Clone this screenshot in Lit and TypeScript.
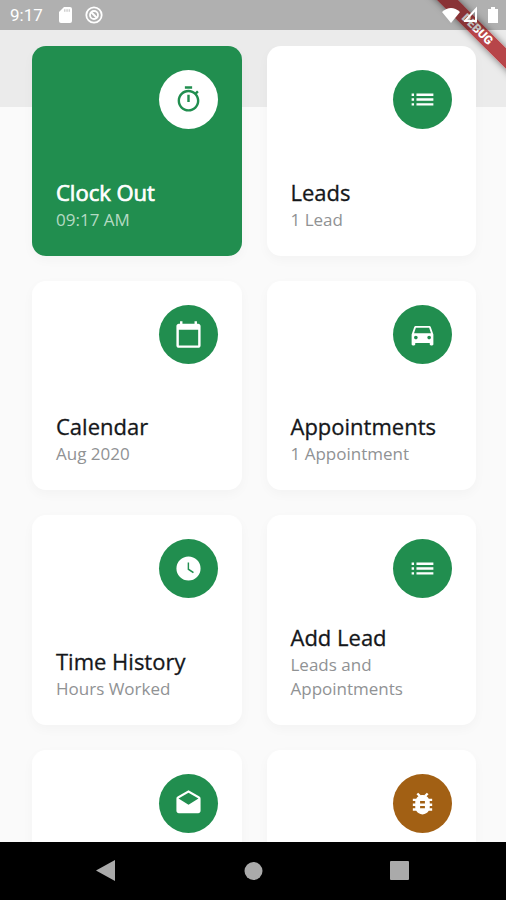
import { LitElement, html, css, svg } from "lit";
import { customElement, property } from "lit/decorators.js";
import { classMap } from "lit/directives/class-map.js";

const icons: Record<string, string> = {
  timer:
    "M15 1H9v2h6V1zm-4 13h2V8h-2v6zm8.03-6.61l1.42-1.42c-.43-.51-.9-.99-1.41-1.41l-1.42 1.42C16.07 4.74 14.12 4 12 4c-4.97 0-9 4.03-9 9s4.02 9 9 9 9-4.03 9-9c0-2.12-.74-4.07-1.97-5.61zM12 20c-3.87 0-7-3.13-7-7s3.13-7 7-7 7 3.13 7 7-3.13 7-7 7z",
  list:
    "M3 13h2v-2H3v2zm0 4h2v-2H3v2zm0-8h2V7H3v2zm4 4h14v-2H7v2zm0 4h14v-2H7v2zM7 7v2h14V7H7z",
  calendar:
    "M20 3h-1V1h-2v2H7V1H5v2H4c-1.1 0-2 .9-2 2v16c0 1.1.9 2 2 2h16c1.1 0 2-.9 2-2V5c0-1.1-.9-2-2-2zm0 18H4V8h16v13z",
  car:
    "M18.92 6.01C18.72 5.42 18.16 5 17.5 5h-11c-.66 0-1.21.42-1.42 1.01L3 12v8c0 .55.45 1 1 1h1c.55 0 1-.45 1-1v-1h12v1c0 .55.45 1 1 1h1c.55 0 1-.45 1-1v-8l-2.08-5.99zM6.5 16c-.83 0-1.5-.67-1.5-1.5S5.67 13 6.5 13s1.5.67 1.5 1.5S7.33 16 6.5 16zm11 0c-.83 0-1.5-.67-1.5-1.5s.67-1.5 1.5-1.5 1.5.67 1.5 1.5-.67 1.5-1.5 1.5zM5 11l1.5-4.5h11L19 11H5z",
  clock:
    "M12 2a10 10 0 1 0 0 20 10 10 0 0 0 0-20zm3.7 14L11.3 13V7h1.2v5.3l4 2.6z",
  mail:
    "M21.99 8c0-.72-.37-1.35-.94-1.7L12 1 2.95 6.3C2.38 6.65 2 7.28 2 8v10c0 1.1.9 2 2 2h16c1.1 0 2-.9 2-2l-.01-10zM12 13L3.74 7.84 12 3l8.26 4.84L12 13z",
  bug:
    "M20 8h-2.81c-.45-.78-1.07-1.45-1.82-1.96L17 4.41 15.59 3l-2.17 2.17C12.96 5.06 12.49 5 12 5c-.49 0-.96.06-1.41.17L8.41 3 7 4.41l1.62 1.63C7.88 6.55 7.26 7.22 6.81 8H4v2h2.09c-.05.33-.09.66-.09 1v1H4v2h2v1c0 .34.04.67.09 1H4v2h2.81c1.04 1.79 2.97 3 5.19 3s4.15-1.21 5.19-3H20v-2h-2.09c.05-.33.09-.66.09-1v-1h2v-2h-2v-1c0-.34-.04-.67-.09-1H20V8zm-6 8h-4v-2h4v2zm0-4h-4v-2h4v2z",
};

interface Tile {
  title: string;
  note: string;
  icon: string;
  tone?: "active" | "bug";
}

const tiles: Tile[] = [
  { title: "Clock Out", note: "09:17 AM", icon: "timer", tone: "active" },
  { title: "Leads", note: "1 Lead", icon: "list" },
  { title: "Calendar", note: "Aug 2020", icon: "calendar" },
  { title: "Appointments", note: "1 Appointment", icon: "car" },
  { title: "Time History", note: "Hours Worked", icon: "clock" },
  { title: "Add Lead", note: "Leads and Appointments", icon: "list" },
  { title: "", note: "", icon: "mail" },
  { title: "", note: "", icon: "bug", tone: "bug" },
];

@customElement("menu-tile")
class MenuTile extends LitElement {
  @property({ attribute: false }) tile!: Tile;

  static styles = css`
    :host {
      display: block;
    }
    .card {
      display: flex;
      flex-direction: column;
      align-items: flex-start;
      justify-content: space-between;
      box-sizing: border-box;
      width: 100%;
      aspect-ratio: 1;
      padding: 24px;
      border: 0;
      border-radius: 14px;
      background: #fff;
      box-shadow: 0 4px 12px rgba(0, 0, 0, 0.03);
      color: #15171a;
      font-family: "Open Sans", "Noto Sans", sans-serif;
      text-align: left;
      cursor: pointer;
    }
    .disc {
      display: grid;
      place-items: center;
      align-self: flex-end;
      width: 59px;
      height: 59px;
      border-radius: 50%;
      background: #218e4f;
      color: #fff;
    }
    .icon {
      width: 29px;
      height: 29px;
      fill: currentColor;
    }
    .title {
      display: block;
      font-size: 22px;
      line-height: 32px;
      font-weight: 400;
      -webkit-text-stroke: 0.3px currentColor;
    }
    .note {
      display: block;
      color: #909294;
      font-size: 17px;
      line-height: 24px;
      font-weight: 400;
    }
    .active {
      background: #218e4f;
      color: #fff;
    }
    .active .title {
      -webkit-text-stroke-width: 0.7px;
    }
    .active .note {
      color: #b4dac3;
    }
    .active .disc {
      background: #fff;
      color: #218e4f;
    }
    .bug .disc {
      background: #a26014;
    }
  `;

  render() {
    const { title, note, icon, tone } = this.tile;
    return html`
      <button
        class=${classMap({ card: true, active: tone === "active", bug: tone === "bug" })}
        aria-label=${title || icon}
      >
        <span class="disc">
          <svg class="icon" viewBox="0 0 24 24" aria-hidden="true">
            <path fill-rule="evenodd" d=${icons[icon]}></path>
          </svg>
        </span>
        <span>
          <span class="title">${title}</span>
          <span class="note">${note}</span>
        </span>
      </button>
    `;
  }
}

@customElement("app-root")
class AppRoot extends LitElement {
  static styles = css`
    :host {
      display: flex;
      flex-direction: column;
      position: relative;
      height: 100vh;
      overflow: hidden;
      background: #fafafa;
    }
    .top {
      background: #ebebeb;
      height: 107px;
      margin-bottom: -61px;
      flex: none;
    }
    .status {
      display: flex;
      align-items: center;
      justify-content: space-between;
      position: relative;
      z-index: 2;
      height: 30px;
      padding: 0 6px 0 10px;
      background: rgba(0, 0, 0, 0.25);
      color: #fff;
      font: 17px/32px Roboto, sans-serif;
    }
    .group {
      display: flex;
      align-items: center;
    }
    .left {
      gap: 12px;
    }
    .right {
      gap: 4px;
    }
    .glyph {
      display: block;
      fill: currentColor;
    }
    .grid {
      display: grid;
      grid-template-columns: 1fr 1fr;
      align-content: start;
      gap: 25px;
      flex: 1;
      min-height: 0;
      padding: 0 30px 0 32px;
      overflow: hidden;
      position: relative;
    }
    .corner {
      position: absolute;
      z-index: 1;
      top: 0;
      right: 0;
      width: 100px;
      height: 100px;
      overflow: hidden;
      pointer-events: none;
    }
    .ribbon {
      position: absolute;
      top: 22px;
      right: -31px;
      width: 120px;
      transform: rotate(45deg);
      background: rgba(170, 28, 32, 0.8);
      box-shadow: 0 0 7px rgba(0, 0, 0, 0.5);
      color: #fff;
      font: 900 12px/15px Roboto, sans-serif;
      text-align: center;
    }
    .nav {
      display: flex;
      align-items: center;
      justify-content: space-around;
      flex: none;
      height: 58px;
      padding: 0 34px;
      background: #000;
      color: #aaa;
    }
    .key {
      display: grid;
      place-items: center;
      width: 44px;
      height: 44px;
      padding: 0;
      border: 0;
      background: none;
      color: inherit;
    }
  `;

  private key(label: string, shape: unknown) {
    return html`
      <button class="key" aria-label=${label}>
        <svg class="glyph" width="22" height="22" viewBox="0 0 22 22">${shape}</svg>
      </button>
    `;
  }

  render() {
    return html`
      <header class="top">
        <div class="status">
          <div class="group left">
            <span>9:17</span>
            <svg class="glyph" width="18" height="18" viewBox="0 0 18 18">
              <path d="M9 1h6a2 2 0 0 1 2 2v12a2 2 0 0 1-2 2H6a2 2 0 0 1-2-2V6z"></path>
              <path d="M9 4.500h6" stroke="#b0b0b0" stroke-opacity=".6" stroke-width="2.500" stroke-dasharray="1.500 .8"></path>
            </svg>
            <svg class="glyph" width="18" height="18" viewBox="0 0 18 18">
              <circle cx="9" cy="9" r="7.700" fill="none" stroke="currentColor" stroke-width="1.800"></circle>
              <circle cx="9" cy="9" r="4" fill="none" stroke="currentColor" stroke-width="1.800"></circle>
              <path d="M6 6l6 6" stroke="currentColor" stroke-width="2"></path>
            </svg>
          </div>
          <div class="group right">
            <svg class="glyph" width="18" height="18" viewBox="0 0 18 18">
              <path d="M0 6Q9-2 18 6L9 17z"></path>
            </svg>
            <svg class="glyph" width="18" height="18" viewBox="0 0 18 18">
              <path d="M1 15L12 3v12z" fill="none" stroke="currentColor" stroke-width="2"></path>
            </svg>
            <svg class="glyph" width="14" height="18" viewBox="0 0 14 18">
              <path d="M5 1h4v2h3v14H2V3h3z"></path>
            </svg>
          </div>
        </div>
      </header>
      <main class="grid">
        ${tiles.map((tile) => html`<menu-tile .tile=${tile}></menu-tile>`)}
      </main>
      <div class="corner"><div class="ribbon">DEBUG</div></div>
      <nav class="nav">
        ${this.key("Back", svg`<path d="M19 0v21L0 10.500z"></path>`)}
        ${this.key("Home", svg`<circle cx="11.500" cy="11" r="9"></circle>`)}
        ${this.key("Recents", svg`<rect x="2" y="1" width="19" height="19" rx="1"></rect>`)}
      </nav>
    `;
  }
}
